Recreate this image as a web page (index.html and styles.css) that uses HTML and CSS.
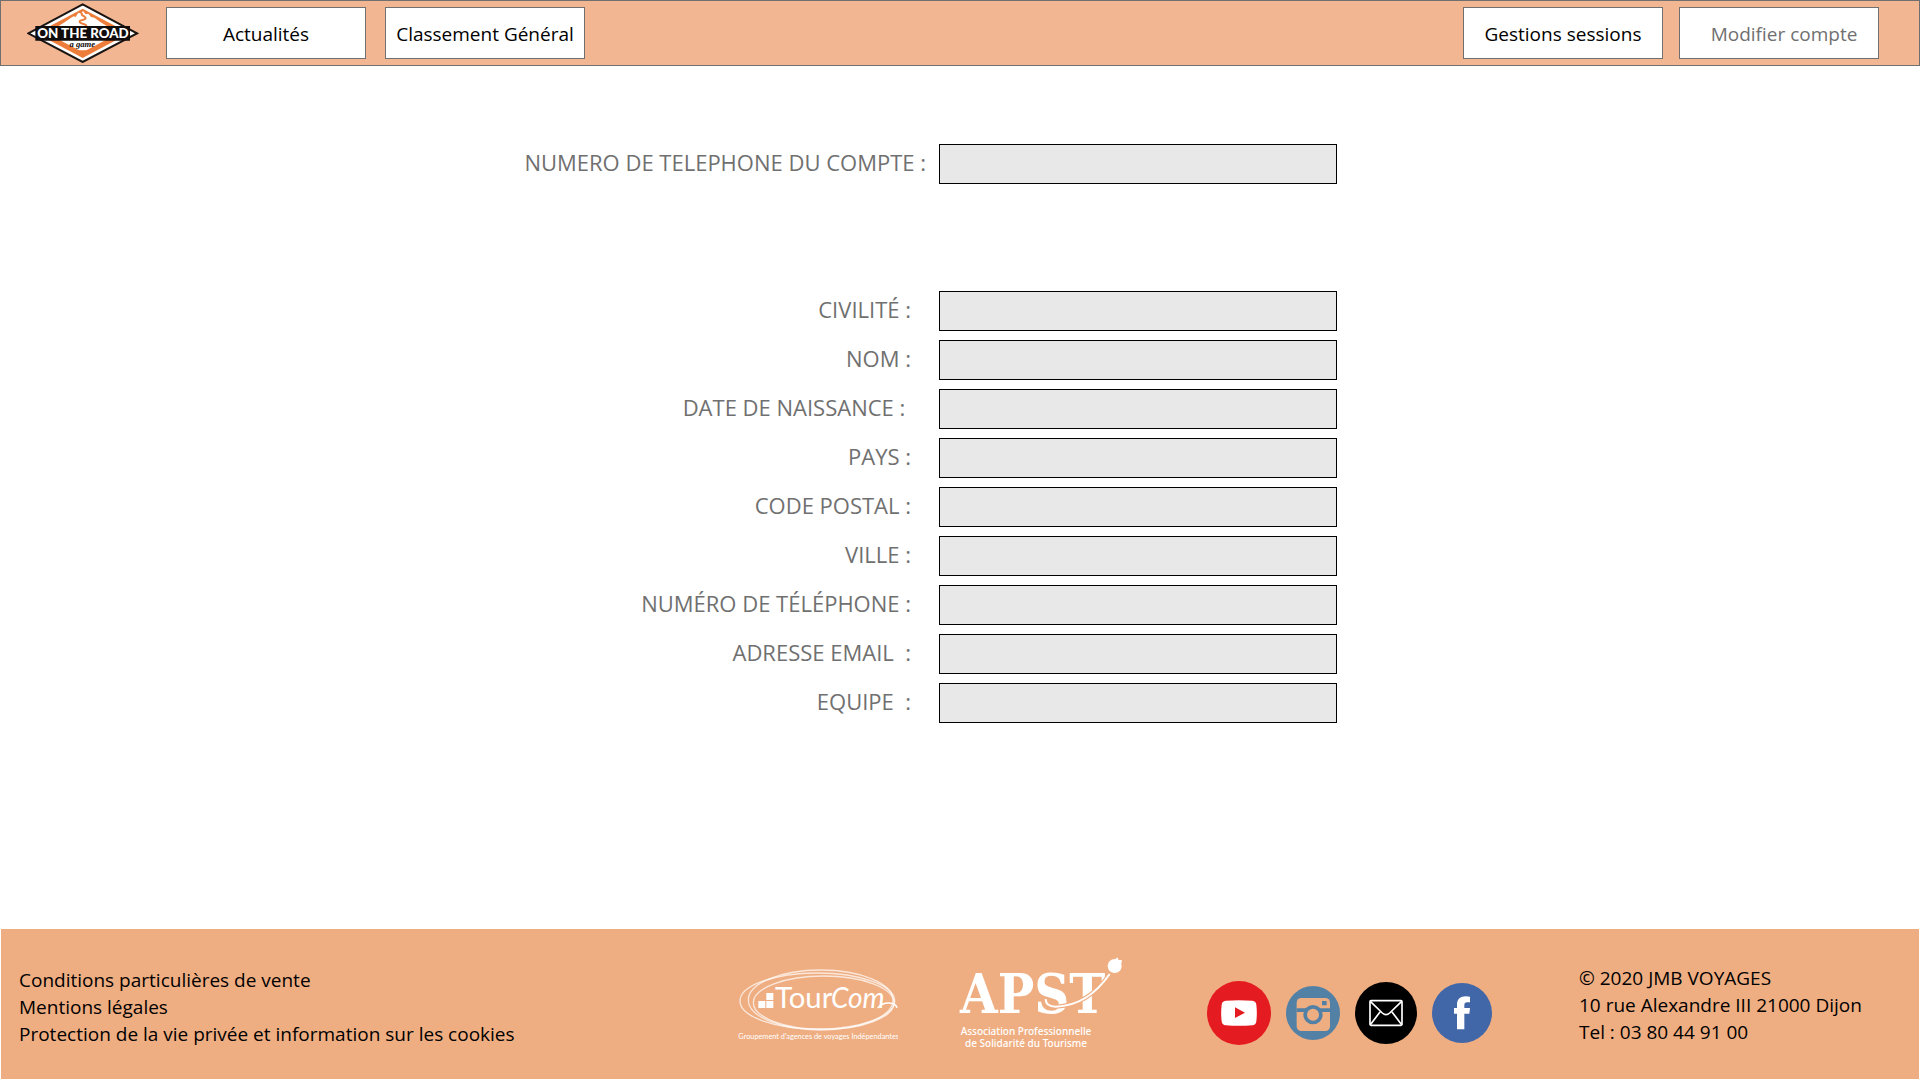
FILE: index.html
```html
<!DOCTYPE html>
<html lang="fr">
<head>
<meta charset="utf-8">
<title>On the Road - Modifier compte</title>
<link rel="stylesheet" href="styles.css">
</head>
<body>
<header class="topbar">
  <a class="brand" href="#" aria-label="On the Road, a game">
    <svg class="brand-logo" viewBox="20 10 336 180">
      <path d="M24 101 187 14 350 101 187 187Z" fill="#fff" stroke="#1a1512" stroke-width="6"/>
      <path d="M48 101 187 27 326 101 187 175Z" fill="#ed7d3a"/>
      <path d="M80 101 134 67 150 56 160 50 166 52 174 39 182 42 188 34 196 44 204 42 212 52 222 54 240 67 294 101 187 158Z" fill="#fff"/>
      <path d="M158 152h58l-29 15z" fill="#ed7d3a"/>
      <path d="M186 40c-8 8 12 10 10 16s-20 4-18 11 22 3 20 14" fill="none" stroke="#ed7d3a" stroke-width="6"/>
      <path d="M45 79h284v44H45z" fill="#100d0c"/>
      <text class="brand-name" x="188" y="115" text-anchor="middle">ON THE ROAD</text>
      <text class="brand-tag" x="186" y="143" text-anchor="middle">a game</text>
    </svg>
  </a>
  <nav class="nav">
    <button class="nav-button" type="button">Actualités</button>
    <button class="nav-button" type="button">Classement Général</button>
  </nav>
  <nav class="nav nav-account">
    <button class="nav-button" type="button">Gestions sessions</button>
    <button class="nav-button nav-button-current" type="button">Modifier compte</button>
  </nav>
</header>

<main class="content">
  <form class="account-form">
    <div class="field field-lookup">
      <label for="compte">NUMERO DE TELEPHONE DU COMPTE :</label>
      <input id="compte" type="tel">
    </div>
    <div class="field"><label for="civilite">CIVILITÉ :</label><input id="civilite" type="text"></div>
    <div class="field"><label for="nom">NOM :</label><input id="nom" type="text"></div>
    <div class="field"><label for="naissance">DATE DE NAISSANCE : </label><input id="naissance" type="text"></div>
    <div class="field"><label for="pays">PAYS :</label><input id="pays" type="text"></div>
    <div class="field"><label for="postal">CODE POSTAL :</label><input id="postal" type="text"></div>
    <div class="field"><label for="ville">VILLE :</label><input id="ville" type="text"></div>
    <div class="field"><label for="telephone">NUMÉRO DE TÉLÉPHONE :</label><input id="telephone" type="tel"></div>
    <div class="field"><label for="email">ADRESSE EMAIL  :</label><input id="email" type="email"></div>
    <div class="field"><label for="equipe">EQUIPE  :</label><input id="equipe" type="text"></div>
  </form>
</main>

<footer class="footer">
  <nav class="legal">
    <a href="#">Conditions particulières de vente</a>
    <a href="#">Mentions légales</a>
    <a href="#">Protection de la vie privée et information sur les cookies</a>
  </nav>
  <div class="partners">
    <svg class="tourcom" viewBox="24 48 480 222" role="img" aria-label="TourCom">
      <g fill="none" stroke="#fff" stroke-opacity=".7" stroke-width="4">
        <ellipse cx="262" cy="150" rx="232" ry="84"/>
        <ellipse cx="272" cy="147" rx="217" ry="90"/>
        <ellipse cx="281" cy="155" rx="211" ry="80"/>
      </g>
      <path d="M85 150h21v21H85zM109 150h21v21h-21zM109 126h21v21h-21z" fill="#fff"/>
      <text class="tourcom-tour" x="135" y="171">Tour</text>
      <text class="tourcom-com" x="303" y="171">Com</text>
      <path d="M443 171q14-16 34-15t24 14" fill="none" stroke="#fff" stroke-width="5"/>
      <text class="tourcom-caption" x="266" y="263" text-anchor="middle">Groupement d'agences de voyages Indépendantes</text>
    </svg>
    <svg class="apst" viewBox="57 54 492 282" role="img" aria-label="APST">
      <text class="apst-name" x="60" y="222">APST</text>
      <path d="M317 180c0 18 12 23 30 23 66-2 122-40 162-98" fill="none" stroke="#efae82" stroke-width="12"/>
      <path d="M317 180c0 18 12 23 30 23 66-2 122-40 162-98" fill="none" stroke="#fff" stroke-width="6"/>
      <circle cx="524" cy="81" r="21" fill="#fff"/>
      <path d="m526 60 6-5 3 7 11 2-2 10z" fill="#fff"/>
      <text class="apst-caption" x="258" y="289" text-anchor="middle">Association Professionnelle</text>
      <text class="apst-caption" x="258" y="324" text-anchor="middle">de Solidarité du Tourisme</text>
    </svg>
  </div>
  <div class="social">
    <a href="#" aria-label="YouTube">
      <svg width="64" height="64" viewBox="36 33 192 192">
        <circle cx="132" cy="129" r="96" fill="#e41b20"/>
        <path d="M92 92q40-3 80 0 11 1 12 12 3 25 0 50-1 11-12 12-40 3-80 0-11-1-12-12-3-25 0-50 1-11 12-12z" fill="#fff"/>
        <path d="m120 112 30 16-30 16z" fill="#e41b20"/>
      </svg>
    </a>
    <a href="#" aria-label="Instagram">
      <svg width="54" height="54" viewBox="273 48 162 162">
        <circle cx="354" cy="129" r="81" fill="#5381a6"/>
        <rect x="305" y="84" width="100" height="99" rx="14" fill="#efae82"/>
        <path d="M305 115h100v11H305zM381 93h14v13h-14z" fill="#5381a6"/>
        <circle cx="354" cy="134" r="29" fill="#5381a6"/>
        <circle cx="354" cy="134" r="18" fill="#efae82"/>
      </svg>
    </a>
    <a href="#" aria-label="E-mail">
      <svg width="62" height="62" viewBox="483 36 186 186">
        <circle cx="576" cy="129" r="93" fill="#000"/>
        <g fill="none" stroke="#fff" stroke-width="5" stroke-linejoin="round">
          <rect x="528" y="92" width="96" height="74" rx="3"/>
          <path d="m529 94 36 35q11 10 22 0l36-35M529 164l29-38M623 164l-29-38"/>
        </g>
      </svg>
    </a>
    <a href="#" aria-label="Facebook">
      <svg width="60" height="60" viewBox="708 39 180 180">
        <circle cx="798" cy="129" r="90" fill="#4267a8"/>
        <path d="M783 178v-47h-9v-17h9v-9c0-18 10-26 27-26l12 1v17h-8c-7 0-9 3-9 9v8h17l-2 17h-15v47z" fill="#fff"/>
      </svg>
    </a>
  </div>
  <address class="contact">
    <span>© 2020 JMB VOYAGES</span>
    <span>10 rue Alexandre III 21000 Dijon</span>
    <span>Tel : 03 80 44 91 00</span>
  </address>
</footer>
</body>
</html>
```
FILE: styles.css
```css
* {
  box-sizing: border-box;
}

body {
  margin: 0;
  min-height: 100vh;
  display: flex;
  flex-direction: column;
  background: #fff;
  color: #000;
  font-family: "Open Sans", "Noto Sans", sans-serif;
  font-size: 19px;
  font-weight: 400;
  line-height: 27px;
}

a {
  color: inherit;
  text-decoration: none;
}

svg {
  display: block;
}

/* Top bar */

.topbar {
  display: flex;
  align-items: center;
  min-height: 66px;
  padding: 0 40px 0 26px;
  background: #f3b692;
  border: 1px solid #707070;
}

.brand-logo {
  width: 112px;
  height: 60px;
}

.brand-name {
  font: 900 40px Lato, sans-serif;
  fill: #fff;
}

.brand-tag {
  font: italic 700 26px "Liberation Serif", serif;
  fill: #100d0c;
}

.nav {
  display: flex;
  gap: 19px;
  margin-left: 27px;
}

.nav-account {
  gap: 16px;
  margin-left: auto;
}

.nav-button {
  width: 200px;
  height: 52px;
  padding: 2px 0 0;
  background: #fff;
  border: 1px solid #707070;
  color: #000;
  font: inherit;
  white-space: nowrap;
}

.nav-button-current {
  padding-left: 10px;
  color: #707070;
}

/* Account form */

.content {
  flex: 1;
  padding: 78px 0;
}

.account-form {
  display: flex;
  flex-direction: column;
  gap: 9px;
}

.field {
  display: grid;
  grid-template-columns: 911fr 981fr;
  column-gap: 28px;
}

.field-lookup {
  grid-template-columns: 926fr 981fr;
  column-gap: 13px;
  margin-bottom: 98px;
}

.field label {
  color: #707070;
  font-size: 22px;
  line-height: 36px;
  text-align: right;
  white-space: pre;
}

.field input {
  width: 398px;
  height: 40px;
  padding: 0 8px;
  background: #e8e8e8;
  border: 1px solid #000;
  border-radius: 0;
  font: inherit;
}

/* Footer */

.footer {
  display: flex;
  align-items: center;
  min-height: 150px;
  margin: 0 1px 1px;
  padding: 0 57px 0 18px;
  background: #efae82;
}

.legal {
  flex: 1;
  display: flex;
  flex-direction: column;
  padding-top: 6px;
}

.partners {
  display: flex;
  align-items: center;
  gap: 61px;
}

.tourcom {
  width: 160px;
  height: 74px;
}

.tourcom-tour {
  font: 400 88px Lato, sans-serif;
  fill: #fff;
}

.tourcom-com {
  font: italic 400 84px Lato, sans-serif;
  fill: #fff;
}

.tourcom-caption {
  font: 400 22px Lato, sans-serif;
  fill: #fff;
}

.apst {
  width: 164px;
  height: 94px;
}

.apst-name {
  font: 700 162px "DejaVu Serif Condensed", "DejaVu Serif", serif;
  fill: #fff;
}

.apst-caption {
  font: 500 30px "Noto Sans", sans-serif;
  fill: #fff;
}

.social {
  display: flex;
  align-items: center;
  gap: 15px;
  margin: 18px 87px 0 84px;
}

.contact {
  display: flex;
  flex-direction: column;
  flex: none;
  width: 283px;
  padding-top: 2px;
  font-style: normal;
  white-space: nowrap;
}
```
